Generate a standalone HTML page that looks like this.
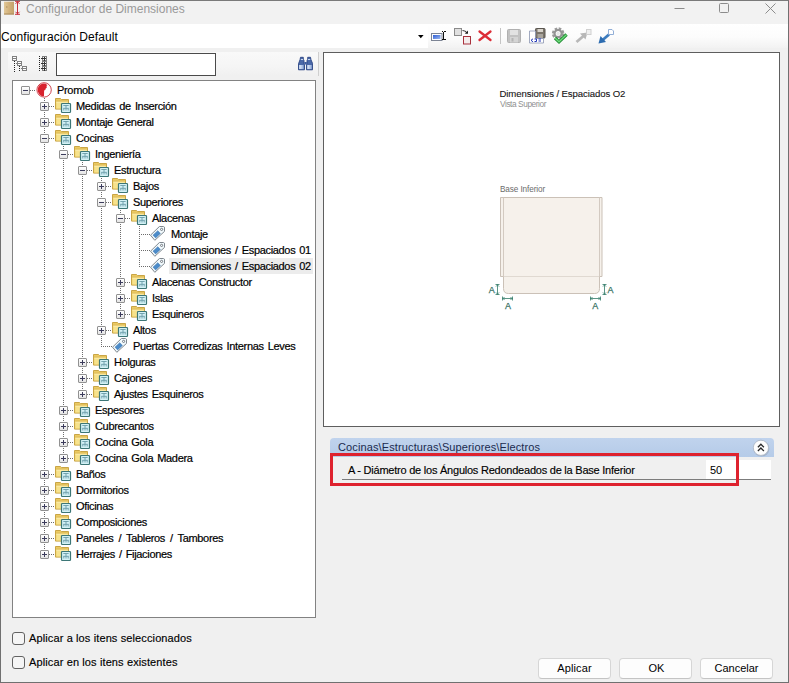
<!DOCTYPE html>
<html><head><meta charset="utf-8"><title>Configurador de Dimensiones</title>
<style>
*{box-sizing:border-box;margin:0;padding:0}
html,body{width:789px;height:683px;overflow:hidden;background:#f0f0f0;font-family:"Liberation Sans",sans-serif;font-size:11px;color:#000}
.abs,.eb,.ic,.tt{position:absolute}
#win{position:absolute;left:0;top:0;width:789px;height:683px;border:1px solid #707070;border-top-color:#7a7a7a;background:#f0f0f0}
#title{position:absolute;left:0;top:0;width:787px;height:23px;background:#f2f2f2}
#title .t{position:absolute;left:25px;top:1px;font-size:12px;line-height:15px;color:#9a9a9a;white-space:nowrap}
#tb{position:absolute;left:1px;top:24px;width:787px;height:24px;background:linear-gradient(#fff,#fcfcfc 55%,#f2f2f2)}
#combo{position:absolute;left:0;top:0;width:427px;height:24px;background:#fff}
#combo .t{position:absolute;left:0px;top:6px;letter-spacing:0.07px;font-size:12px;line-height:15px;white-space:nowrap}
.dl{stroke:#6c6c6c;stroke-width:1;stroke-dasharray:1 1}
.eb{width:9px;height:9px;border:1px solid #919191;background:linear-gradient(#fff,#e4e4e4);border-radius:1px}
.eb .h{position:absolute;left:1px;top:3px;width:5px;height:1px;background:#3c3c5c}
.eb .v{position:absolute;left:3px;top:1px;width:1px;height:5px;background:#3c3c5c}
.tt{height:16px;line-height:16px;padding:0 2px;white-space:nowrap;font-size:11px;-webkit-text-stroke:0.2px #000;letter-spacing:-0.33px;word-spacing:1.3px}
.tt.sel{background:#ececec}
#tree{position:absolute;left:12px;top:80px;width:304px;height:538px;border:1px solid #828282;background:#fff}
#ts{position:absolute;left:8px;top:52px;width:311px;height:24px;background:linear-gradient(#f9f9f9,#f5f5f5 60%,#f0f0f0);border-right:1px solid #cfcfcf}
#search{position:absolute;left:56px;top:53px;width:160px;height:23px;border:1px solid #4a4a4a;background:#fff}
#prev{position:absolute;left:323px;top:52px;width:457px;height:375px;border:1px solid #5e5e5e;background:#fff}
.btn{position:absolute;top:658px;height:21px;width:73px;border:1px solid #d6d6d6;border-bottom-color:#c4c4c4;border-radius:4px;background:#fdfdfd;text-align:center;line-height:19px;font-size:11px}
.cb{position:absolute;width:13px;height:13px;border:1px solid #626262;border-radius:3px;background:#f5f5f5}
.cl{position:absolute;-webkit-text-stroke:0.15px #000;font-size:11px;line-height:14px;white-space:nowrap;letter-spacing:0.12px}
#hdr{position:absolute;left:330px;top:438px;width:444px;height:19px;color:#1a2a4e;background:linear-gradient(#c0d3ed,#b5cbe8);border-radius:4px 4px 0 0}
#hdr .t{position:absolute;left:8px;top:2px;font-size:11px;line-height:14px;white-space:nowrap;letter-spacing:0.12px}
#row{position:absolute;left:342px;top:460px;width:429px;height:20px;border-bottom:1px solid #7c7c7c}
#row .t{position:absolute;left:6px;top:3px;font-size:11px;line-height:14px;white-space:nowrap;letter-spacing:-0.23px;-webkit-text-stroke:0.15px #000}
#val{position:absolute;left:706px;top:460px;width:65px;height:19px;background:#fff}
#val .t{position:absolute;left:4px;top:3px;font-size:11px;line-height:14px}
#red{position:absolute;left:330px;top:453px;width:409px;height:33px;border:3px solid #de222e}
</style></head><body>
<div id="win">
<div id="title"><div class="t">Configurador de Dimensiones</div></div>
</div>
<!-- title icon -->
<svg class="abs" style="left:3px;top:0px" width="20" height="16" viewBox="0 0 20 16">
<defs><linearGradient id="dg" x1="0" x2="1"><stop offset="0" stop-color="#e2c898"/><stop offset="0.5" stop-color="#d2b27c"/><stop offset="1" stop-color="#c4a26c"/></linearGradient></defs>
<rect x="1" y="1.700" width="10" height="12.800" fill="url(#dg)"/>
<rect x="1" y="13.500" width="10" height="1" fill="#a88a5c"/>
<circle cx="3.800" cy="7" r="0.800" fill="#b09060"/>
<path d="M12 1.300 h5 M12 14.300 h5 M14.500 1.500 v13 M12.500 3.800 l2-2 l2 2 M12.500 11.800 l2 2 l2-2" stroke="#c62f3a" stroke-width="1" fill="none"/>
</svg>
<!-- window controls -->
<svg class="abs" style="left:660px;top:0" width="128" height="24" viewBox="0 0 128 24">
<path d="M14.500 8.500 h10" stroke="#8c8c8c" stroke-width="1"/>
<rect x="59.500" y="3.500" width="9" height="9" rx="1" fill="none" stroke="#8c8c8c" stroke-width="1"/>
<path d="M105.500 3.500 l10 10 M115.500 3.500 l-10 10" stroke="#8c8c8c" stroke-width="1"/>
</svg>
<div id="tb"><div id="combo"><div class="t">Configuración Default</div></div></div>
<!-- toolbar icons -->
<svg class="abs" style="left:414px;top:24px" width="210" height="24" viewBox="0 0 210 24">
<defs><linearGradient id="bg1" x1="0" x2="1" y1="0" y2="1"><stop offset="0" stop-color="#2f5fd6"/><stop offset="1" stop-color="#9db8ee"/></linearGradient></defs>
<path d="M4 11 h5.600 l-2.800 3.200z" fill="#000"/>
<!-- rename -->
<rect x="17.500" y="9.500" width="10.500" height="7" fill="#fff" stroke="#7c8494"/>
<rect x="19" y="11" width="7.500" height="4" fill="url(#bg1)"/>
<path d="M27.500 7.500 h1.500 M30 7.500 h1.500 M27.500 15.500 h1.500 M30 15.500 h1.500 M29.500 8 v7.500" stroke="#111" stroke-width="1" shape-rendering="crispEdges"/>
<!-- copy squares -->
<rect x="40.500" y="4.500" width="7" height="7" fill="#e0e0e0" stroke="#8a8a8a"/>
<rect x="49.500" y="12.500" width="7" height="7.500" fill="#f4ecec" stroke="#a8303c"/>
<path d="M48.500 6.500 q3 0 4.500 2.500" stroke="#333" stroke-width="1.100" fill="none"/>
<path d="M50.800 9.800 h3.200 v-3.200z" fill="#222"/>
<!-- red X -->
<path d="M65.500 7.500 l11 8.500 M76.500 7.500 l-11 8.500" stroke="#dc2c36" stroke-width="2.300" stroke-linecap="round"/>
<!-- separator -->
<path d="M86.500 4 v16" stroke="#c4c4c4"/>
<!-- save gray -->
<rect x="93.500" y="5.500" width="13" height="13" rx="1" fill="#c2c2c2" stroke="#b0b0b0"/>
<rect x="96" y="6" width="8" height="5" fill="#e2e2e2"/>
<rect x="96" y="13" width="8" height="5.500" fill="#d4d4d4"/>
<rect x="97.500" y="14" width="2" height="3.500" fill="#b4b4b4"/>
<!-- save as -->
<rect x="121.500" y="4.500" width="9.500" height="9.500" rx="0.800" fill="#7a746a" stroke="#5a5650"/>
<rect x="123.500" y="5" width="5.500" height="3" fill="#d8d4cc"/>
<rect x="123.500" y="10" width="5.500" height="4" fill="#a8a49c"/>
<path d="M115.500 7 h6 v7.500 h8 v4.500 h-14z" fill="#fff" stroke="#8a94b0" stroke-width="0.800"/>
<path d="M119 14.800 l-2 1.500 l2 1.500 M120.500 17.500 h2 v-2.500 h-2 M124.500 15 h2.500 M124.500 17 h2.500" stroke="#2438b8" stroke-width="1" fill="none"/>
<!-- gear check -->
<circle cx="144.100" cy="9.600" r="4.600" fill="none" stroke="#9a9a9a" stroke-width="3.400" stroke-dasharray="2.300 1.310"/>
<circle cx="144.100" cy="9.600" r="3.600" fill="none" stroke="#949494" stroke-width="2.200"/>
<circle cx="144.100" cy="9.600" r="1.800" fill="#e8e8e8"/>
<path d="M141 14 l4 3.800 l7.600 -7.300" stroke="#1f8a32" stroke-width="3.200" fill="none"/>
<path d="M141 14 l4 3.800 l7.600 -7.300" stroke="#6fdc7c" stroke-width="1.300" fill="none"/>
<!-- gray arrow -->
<path d="M162.500 18 l7 -6" stroke="#b8b8b8" stroke-width="2.800"/>
<path d="M166 9.500 l7.500 -1 l-2 7z" fill="#b8b8b8"/>
<rect x="172.500" y="5.500" width="4.500" height="5" fill="#f0f0f0" stroke="#d0d0d0"/>
<!-- blue arrow -->
<path d="M195 10.500 l-7 6" stroke="#3d7cbe" stroke-width="2.800"/>
<path d="M184.500 19.500 l2 -7.500 l5.500 6z" fill="#2d6cb0"/>
<path d="M194.500 5.500 h3.500 l1.500 1.500 v3.500 h-5z" fill="#fff" stroke="#86a6d2" stroke-width="0.900"/>
</svg>
<div id="ts"></div>
<!-- tree toolbar icons -->
<svg class="abs" style="left:10px;top:54px" width="42" height="20" viewBox="10 54 42 20" shape-rendering="crispEdges">
<g stroke="#808080" fill="none" stroke-width="1">
<path d="M14.500 61 v11 M19.500 66 v6" stroke="#222" stroke-dasharray="1 1"/>
<path d="M39.500 56 v16" stroke="#222" stroke-dasharray="1 1"/>
<rect x="12.500" y="56.500" width="4" height="4" fill="#fff"/><path d="M13 58.500 h4"/>
<rect x="17.500" y="61.500" width="4" height="4" fill="#fff"/><path d="M16 63.500 h5"/>
<rect x="22.500" y="66.500" width="4" height="4" fill="#fff"/><path d="M21 68.500 h5"/>
<rect x="42.500" y="56.500" width="4" height="4" fill="#fff"/><path d="M41 58.500 h5 M44.500 57 v4" stroke="#333"/>
<rect x="42.500" y="61.500" width="4" height="4" fill="#fff"/><path d="M41 63.500 h5 M44.500 62 v4" stroke="#333"/>
<rect x="42.500" y="66.500" width="4" height="4" fill="#fff"/><path d="M41 68.500 h5 M44.500 67 v4" stroke="#333"/>
</g></svg>
<div id="search"></div>
<!-- binoculars -->
<svg class="abs" style="left:296px;top:55px" width="20" height="17" viewBox="296 55 20 17">
<defs><linearGradient id="bn" x1="0" x2="1"><stop offset="0" stop-color="#e8f0fc"/><stop offset="1" stop-color="#8ea8d8"/></linearGradient></defs>
<path d="M300.500 57.300 h2.800 v1.700 l0.700 1.500 v3 l0.500 1 v5.300 h-6 v-6 l1.500 -4z" fill="#4a68a8" stroke="#2c4684" stroke-width="0.900"/>
<path d="M307.700 57.300 h2.800 l0.500 2.500 l1.500 3.500 v6.500 h-6 v-5.300 l0.500 -1 v-3 l0.700 -1.500z" fill="#4a68a8" stroke="#2c4684" stroke-width="0.900"/>
<rect x="304.300" y="62" width="2.500" height="2.500" fill="#3c5a9c"/>
<rect x="299.200" y="65" width="4.500" height="4" fill="url(#bn)"/><rect x="307.300" y="65" width="4.500" height="4" fill="url(#bn)"/>
<path d="M300.800 59.500 h2.400 M307.800 59.500 h2.400" stroke="#c8d8f0" stroke-width="1"/>
</svg>
<div id="tree"></div>
<svg class="lines" width="789" height="683" style="position:absolute;left:0;top:0" shape-rendering="crispEdges">
<line x1="44.5" y1="98" x2="44.5" y2="555" class="dl"/>
<line x1="63.5" y1="146" x2="63.5" y2="459" class="dl"/>
<line x1="82.5" y1="162" x2="82.5" y2="395" class="dl"/>
<line x1="101.5" y1="178" x2="101.5" y2="347" class="dl"/>
<line x1="120.5" y1="210" x2="120.5" y2="315" class="dl"/>
<line x1="139.5" y1="226" x2="139.5" y2="267" class="dl"/>
<line x1="30" y1="90.5" x2="36" y2="90.5" class="dl"/>
<line x1="49" y1="106.5" x2="55" y2="106.5" class="dl"/>
<line x1="49" y1="122.5" x2="55" y2="122.5" class="dl"/>
<line x1="49" y1="138.5" x2="55" y2="138.5" class="dl"/>
<line x1="68" y1="154.5" x2="74" y2="154.5" class="dl"/>
<line x1="87" y1="170.5" x2="93" y2="170.5" class="dl"/>
<line x1="106" y1="186.5" x2="112" y2="186.5" class="dl"/>
<line x1="106" y1="202.5" x2="112" y2="202.5" class="dl"/>
<line x1="125" y1="218.5" x2="131" y2="218.5" class="dl"/>
<line x1="139" y1="234.5" x2="150" y2="234.5" class="dl"/>
<line x1="139" y1="250.5" x2="150" y2="250.5" class="dl"/>
<line x1="139" y1="266.5" x2="150" y2="266.5" class="dl"/>
<line x1="125" y1="282.5" x2="131" y2="282.5" class="dl"/>
<line x1="125" y1="298.5" x2="131" y2="298.5" class="dl"/>
<line x1="125" y1="314.5" x2="131" y2="314.5" class="dl"/>
<line x1="106" y1="330.5" x2="112" y2="330.5" class="dl"/>
<line x1="101" y1="346.5" x2="112" y2="346.5" class="dl"/>
<line x1="87" y1="362.5" x2="93" y2="362.5" class="dl"/>
<line x1="87" y1="378.5" x2="93" y2="378.5" class="dl"/>
<line x1="87" y1="394.5" x2="93" y2="394.5" class="dl"/>
<line x1="68" y1="410.5" x2="74" y2="410.5" class="dl"/>
<line x1="68" y1="426.5" x2="74" y2="426.5" class="dl"/>
<line x1="68" y1="442.5" x2="74" y2="442.5" class="dl"/>
<line x1="68" y1="458.5" x2="74" y2="458.5" class="dl"/>
<line x1="49" y1="474.5" x2="55" y2="474.5" class="dl"/>
<line x1="49" y1="490.5" x2="55" y2="490.5" class="dl"/>
<line x1="49" y1="506.5" x2="55" y2="506.5" class="dl"/>
<line x1="49" y1="522.5" x2="55" y2="522.5" class="dl"/>
<line x1="49" y1="538.5" x2="55" y2="538.5" class="dl"/>
<line x1="49" y1="554.5" x2="55" y2="554.5" class="dl"/>
</svg>
<div class="eb" style="left:21px;top:86px"><i class="h"></i></div>
<svg class="ic" style="left:36px;top:82px" width="17" height="17" viewBox="0 0 17 17"><circle cx="8.100" cy="7.900" r="7.200" fill="#fff" stroke="#cf4650" stroke-width="1"/><path d="M8 1.500 L10.900 2.100 L10.200 3 L11.400 3.800 L10.300 4.800 L10.900 5.800 L9.600 6.400 L9.800 7.300 L8.600 7.900 L8.100 9 L8 14.300 A6.400 6.400 0 0 1 8 1.500z" fill="#d8222e"/></svg>
<div class="tt" style="left:55px;top:82px">Promob</div>
<div class="eb" style="left:40px;top:102px"><i class="h"></i><i class="v"></i></div>
<svg class="ic" style="left:55px;top:98px" width="17" height="16" viewBox="0 0 17 16"><path d="M0.500 0.500 h5 l1 1 h7 v9.600 h-13z" fill="#ecca62" stroke="#c9a545" stroke-width="1"/><path d="M1.300 3.500 h11.400 v7 h-11.400z" fill="#f7e28c"/><path d="M1.300 3 h11.400" stroke="#d8b656" stroke-width="0.800"/><path d="M1.300 4.300 h11.400" stroke="#fbeeb0" stroke-width="0.800"/><rect x="6.500" y="5.500" width="9" height="9" rx="0.800" fill="#d3f1f6" stroke="#3c7676" stroke-width="1.200"/><path d="M8.300 7.500 h5.400 M8.300 10.300 h5.400 M11 7.500 v5 M8.800 10.300 v2.200 M13.200 10.300 v2.200" stroke="#6a9ca8" stroke-width="0.900" fill="none"/></svg>
<div class="tt" style="left:74px;top:98px">Medidas de Inserción</div>
<div class="eb" style="left:40px;top:118px"><i class="h"></i><i class="v"></i></div>
<svg class="ic" style="left:55px;top:114px" width="17" height="16" viewBox="0 0 17 16"><path d="M0.500 0.500 h5 l1 1 h7 v9.600 h-13z" fill="#ecca62" stroke="#c9a545" stroke-width="1"/><path d="M1.300 3.500 h11.400 v7 h-11.400z" fill="#f7e28c"/><path d="M1.300 3 h11.400" stroke="#d8b656" stroke-width="0.800"/><path d="M1.300 4.300 h11.400" stroke="#fbeeb0" stroke-width="0.800"/><rect x="6.500" y="5.500" width="9" height="9" rx="0.800" fill="#d3f1f6" stroke="#3c7676" stroke-width="1.200"/><path d="M8.300 7.500 h5.400 M8.300 10.300 h5.400 M11 7.500 v5 M8.800 10.300 v2.200 M13.200 10.300 v2.200" stroke="#6a9ca8" stroke-width="0.900" fill="none"/></svg>
<div class="tt" style="left:74px;top:114px">Montaje General</div>
<div class="eb" style="left:40px;top:134px"><i class="h"></i></div>
<svg class="ic" style="left:55px;top:130px" width="17" height="16" viewBox="0 0 17 16"><path d="M0.500 0.500 h5 l1 1 h7 v9.600 h-13z" fill="#ecca62" stroke="#c9a545" stroke-width="1"/><path d="M1.300 3.500 h11.400 v7 h-11.400z" fill="#f7e28c"/><path d="M1.300 3 h11.400" stroke="#d8b656" stroke-width="0.800"/><path d="M1.300 4.300 h11.400" stroke="#fbeeb0" stroke-width="0.800"/><rect x="6.500" y="5.500" width="9" height="9" rx="0.800" fill="#d3f1f6" stroke="#3c7676" stroke-width="1.200"/><path d="M8.300 7.500 h5.400 M8.300 10.300 h5.400 M11 7.500 v5 M8.800 10.300 v2.200 M13.200 10.300 v2.200" stroke="#6a9ca8" stroke-width="0.900" fill="none"/></svg>
<div class="tt" style="left:74px;top:130px">Cocinas</div>
<div class="eb" style="left:59px;top:150px"><i class="h"></i></div>
<svg class="ic" style="left:74px;top:146px" width="17" height="16" viewBox="0 0 17 16"><path d="M0.500 0.500 h5 l1 1 h7 v9.600 h-13z" fill="#ecca62" stroke="#c9a545" stroke-width="1"/><path d="M1.300 3.500 h11.400 v7 h-11.400z" fill="#f7e28c"/><path d="M1.300 3 h11.400" stroke="#d8b656" stroke-width="0.800"/><path d="M1.300 4.300 h11.400" stroke="#fbeeb0" stroke-width="0.800"/><rect x="6.500" y="5.500" width="9" height="9" rx="0.800" fill="#d3f1f6" stroke="#3c7676" stroke-width="1.200"/><path d="M8.300 7.500 h5.400 M8.300 10.300 h5.400 M11 7.500 v5 M8.800 10.300 v2.200 M13.200 10.300 v2.200" stroke="#6a9ca8" stroke-width="0.900" fill="none"/></svg>
<div class="tt" style="left:93px;top:146px">Ingeniería</div>
<div class="eb" style="left:78px;top:166px"><i class="h"></i></div>
<svg class="ic" style="left:93px;top:162px" width="17" height="16" viewBox="0 0 17 16"><path d="M0.500 0.500 h5 l1 1 h7 v9.600 h-13z" fill="#ecca62" stroke="#c9a545" stroke-width="1"/><path d="M1.300 3.500 h11.400 v7 h-11.400z" fill="#f7e28c"/><path d="M1.300 3 h11.400" stroke="#d8b656" stroke-width="0.800"/><path d="M1.300 4.300 h11.400" stroke="#fbeeb0" stroke-width="0.800"/><rect x="6.500" y="5.500" width="9" height="9" rx="0.800" fill="#d3f1f6" stroke="#3c7676" stroke-width="1.200"/><path d="M8.300 7.500 h5.400 M8.300 10.300 h5.400 M11 7.500 v5 M8.800 10.300 v2.200 M13.200 10.300 v2.200" stroke="#6a9ca8" stroke-width="0.900" fill="none"/></svg>
<div class="tt" style="left:112px;top:162px">Estructura</div>
<div class="eb" style="left:97px;top:182px"><i class="h"></i><i class="v"></i></div>
<svg class="ic" style="left:112px;top:178px" width="17" height="16" viewBox="0 0 17 16"><path d="M0.500 0.500 h5 l1 1 h7 v9.600 h-13z" fill="#ecca62" stroke="#c9a545" stroke-width="1"/><path d="M1.300 3.500 h11.400 v7 h-11.400z" fill="#f7e28c"/><path d="M1.300 3 h11.400" stroke="#d8b656" stroke-width="0.800"/><path d="M1.300 4.300 h11.400" stroke="#fbeeb0" stroke-width="0.800"/><rect x="6.500" y="5.500" width="9" height="9" rx="0.800" fill="#d3f1f6" stroke="#3c7676" stroke-width="1.200"/><path d="M8.300 7.500 h5.400 M8.300 10.300 h5.400 M11 7.500 v5 M8.800 10.300 v2.200 M13.200 10.300 v2.200" stroke="#6a9ca8" stroke-width="0.900" fill="none"/></svg>
<div class="tt" style="left:131px;top:178px">Bajos</div>
<div class="eb" style="left:97px;top:198px"><i class="h"></i></div>
<svg class="ic" style="left:112px;top:194px" width="17" height="16" viewBox="0 0 17 16"><path d="M0.500 0.500 h5 l1 1 h7 v9.600 h-13z" fill="#ecca62" stroke="#c9a545" stroke-width="1"/><path d="M1.300 3.500 h11.400 v7 h-11.400z" fill="#f7e28c"/><path d="M1.300 3 h11.400" stroke="#d8b656" stroke-width="0.800"/><path d="M1.300 4.300 h11.400" stroke="#fbeeb0" stroke-width="0.800"/><rect x="6.500" y="5.500" width="9" height="9" rx="0.800" fill="#d3f1f6" stroke="#3c7676" stroke-width="1.200"/><path d="M8.300 7.500 h5.400 M8.300 10.300 h5.400 M11 7.500 v5 M8.800 10.300 v2.200 M13.200 10.300 v2.200" stroke="#6a9ca8" stroke-width="0.900" fill="none"/></svg>
<div class="tt" style="left:131px;top:194px">Superiores</div>
<div class="eb" style="left:116px;top:214px"><i class="h"></i></div>
<svg class="ic" style="left:131px;top:210px" width="17" height="16" viewBox="0 0 17 16"><path d="M0.500 0.500 h5 l1 1 h7 v9.600 h-13z" fill="#ecca62" stroke="#c9a545" stroke-width="1"/><path d="M1.300 3.500 h11.400 v7 h-11.400z" fill="#f7e28c"/><path d="M1.300 3 h11.400" stroke="#d8b656" stroke-width="0.800"/><path d="M1.300 4.300 h11.400" stroke="#fbeeb0" stroke-width="0.800"/><rect x="6.500" y="5.500" width="9" height="9" rx="0.800" fill="#d3f1f6" stroke="#3c7676" stroke-width="1.200"/><path d="M8.300 7.500 h5.400 M8.300 10.300 h5.400 M11 7.500 v5 M8.800 10.300 v2.200 M13.200 10.300 v2.200" stroke="#6a9ca8" stroke-width="0.900" fill="none"/></svg>
<div class="tt" style="left:150px;top:210px">Alacenas</div>
<svg class="ic" style="left:150px;top:226px" width="16" height="16" viewBox="0 0 16 16"><path d="M0.500 9.200 L4.800 14.300 L14.500 5.400 L14.500 1.200 L13.400 0.500 L9.400 0.500z" fill="#f2fafd" stroke="#7f878e" stroke-width="1" stroke-linejoin="round"/><rect x="3.450" y="6.400" width="6.500" height="3.800" fill="#4b8bc9" stroke="#3d74ad" stroke-width="0.500" transform="rotate(-43 6.700 8.300)"/><circle cx="11.600" cy="3.400" r="1.100" fill="#fff" stroke="#666e76" stroke-width="0.900"/></svg>
<div class="tt" style="left:169px;top:226px">Montaje</div>
<svg class="ic" style="left:150px;top:242px" width="16" height="16" viewBox="0 0 16 16"><path d="M0.500 9.200 L4.800 14.300 L14.500 5.400 L14.500 1.200 L13.400 0.500 L9.400 0.500z" fill="#f2fafd" stroke="#7f878e" stroke-width="1" stroke-linejoin="round"/><rect x="3.450" y="6.400" width="6.500" height="3.800" fill="#4b8bc9" stroke="#3d74ad" stroke-width="0.500" transform="rotate(-43 6.700 8.300)"/><circle cx="11.600" cy="3.400" r="1.100" fill="#fff" stroke="#666e76" stroke-width="0.900"/></svg>
<div class="tt" style="left:169px;top:242px">Dimensiones / Espaciados 01</div>
<svg class="ic" style="left:150px;top:258px" width="16" height="16" viewBox="0 0 16 16"><path d="M0.500 9.200 L4.800 14.300 L14.500 5.400 L14.500 1.200 L13.400 0.500 L9.400 0.500z" fill="#f2fafd" stroke="#7f878e" stroke-width="1" stroke-linejoin="round"/><rect x="3.450" y="6.400" width="6.500" height="3.800" fill="#4b8bc9" stroke="#3d74ad" stroke-width="0.500" transform="rotate(-43 6.700 8.300)"/><circle cx="11.600" cy="3.400" r="1.100" fill="#fff" stroke="#666e76" stroke-width="0.900"/></svg>
<div class="tt sel" style="left:169px;top:258px">Dimensiones / Espaciados 02</div>
<div class="eb" style="left:116px;top:278px"><i class="h"></i><i class="v"></i></div>
<svg class="ic" style="left:131px;top:274px" width="17" height="16" viewBox="0 0 17 16"><path d="M0.500 0.500 h5 l1 1 h7 v9.600 h-13z" fill="#ecca62" stroke="#c9a545" stroke-width="1"/><path d="M1.300 3.500 h11.400 v7 h-11.400z" fill="#f7e28c"/><path d="M1.300 3 h11.400" stroke="#d8b656" stroke-width="0.800"/><path d="M1.300 4.300 h11.400" stroke="#fbeeb0" stroke-width="0.800"/><rect x="6.500" y="5.500" width="9" height="9" rx="0.800" fill="#d3f1f6" stroke="#3c7676" stroke-width="1.200"/><path d="M8.300 7.500 h5.400 M8.300 10.300 h5.400 M11 7.500 v5 M8.800 10.300 v2.200 M13.200 10.300 v2.200" stroke="#6a9ca8" stroke-width="0.900" fill="none"/></svg>
<div class="tt" style="left:150px;top:274px">Alacenas Constructor</div>
<div class="eb" style="left:116px;top:294px"><i class="h"></i><i class="v"></i></div>
<svg class="ic" style="left:131px;top:290px" width="17" height="16" viewBox="0 0 17 16"><path d="M0.500 0.500 h5 l1 1 h7 v9.600 h-13z" fill="#ecca62" stroke="#c9a545" stroke-width="1"/><path d="M1.300 3.500 h11.400 v7 h-11.400z" fill="#f7e28c"/><path d="M1.300 3 h11.400" stroke="#d8b656" stroke-width="0.800"/><path d="M1.300 4.300 h11.400" stroke="#fbeeb0" stroke-width="0.800"/><rect x="6.500" y="5.500" width="9" height="9" rx="0.800" fill="#d3f1f6" stroke="#3c7676" stroke-width="1.200"/><path d="M8.300 7.500 h5.400 M8.300 10.300 h5.400 M11 7.500 v5 M8.800 10.300 v2.200 M13.200 10.300 v2.200" stroke="#6a9ca8" stroke-width="0.900" fill="none"/></svg>
<div class="tt" style="left:150px;top:290px">Islas</div>
<div class="eb" style="left:116px;top:310px"><i class="h"></i><i class="v"></i></div>
<svg class="ic" style="left:131px;top:306px" width="17" height="16" viewBox="0 0 17 16"><path d="M0.500 0.500 h5 l1 1 h7 v9.600 h-13z" fill="#ecca62" stroke="#c9a545" stroke-width="1"/><path d="M1.300 3.500 h11.400 v7 h-11.400z" fill="#f7e28c"/><path d="M1.300 3 h11.400" stroke="#d8b656" stroke-width="0.800"/><path d="M1.300 4.300 h11.400" stroke="#fbeeb0" stroke-width="0.800"/><rect x="6.500" y="5.500" width="9" height="9" rx="0.800" fill="#d3f1f6" stroke="#3c7676" stroke-width="1.200"/><path d="M8.300 7.500 h5.400 M8.300 10.300 h5.400 M11 7.500 v5 M8.800 10.300 v2.200 M13.200 10.300 v2.200" stroke="#6a9ca8" stroke-width="0.900" fill="none"/></svg>
<div class="tt" style="left:150px;top:306px">Esquineros</div>
<div class="eb" style="left:97px;top:326px"><i class="h"></i><i class="v"></i></div>
<svg class="ic" style="left:112px;top:322px" width="17" height="16" viewBox="0 0 17 16"><path d="M0.500 0.500 h5 l1 1 h7 v9.600 h-13z" fill="#ecca62" stroke="#c9a545" stroke-width="1"/><path d="M1.300 3.500 h11.400 v7 h-11.400z" fill="#f7e28c"/><path d="M1.300 3 h11.400" stroke="#d8b656" stroke-width="0.800"/><path d="M1.300 4.300 h11.400" stroke="#fbeeb0" stroke-width="0.800"/><rect x="6.500" y="5.500" width="9" height="9" rx="0.800" fill="#d3f1f6" stroke="#3c7676" stroke-width="1.200"/><path d="M8.300 7.500 h5.400 M8.300 10.300 h5.400 M11 7.500 v5 M8.800 10.300 v2.200 M13.200 10.300 v2.200" stroke="#6a9ca8" stroke-width="0.900" fill="none"/></svg>
<div class="tt" style="left:131px;top:322px">Altos</div>
<svg class="ic" style="left:112px;top:338px" width="16" height="16" viewBox="0 0 16 16"><path d="M0.500 9.200 L4.800 14.300 L14.500 5.400 L14.500 1.200 L13.400 0.500 L9.400 0.500z" fill="#f2fafd" stroke="#7f878e" stroke-width="1" stroke-linejoin="round"/><rect x="3.450" y="6.400" width="6.500" height="3.800" fill="#4b8bc9" stroke="#3d74ad" stroke-width="0.500" transform="rotate(-43 6.700 8.300)"/><circle cx="11.600" cy="3.400" r="1.100" fill="#fff" stroke="#666e76" stroke-width="0.900"/></svg>
<div class="tt" style="left:131px;top:338px">Puertas Corredizas Internas Leves</div>
<div class="eb" style="left:78px;top:358px"><i class="h"></i><i class="v"></i></div>
<svg class="ic" style="left:93px;top:354px" width="17" height="16" viewBox="0 0 17 16"><path d="M0.500 0.500 h5 l1 1 h7 v9.600 h-13z" fill="#ecca62" stroke="#c9a545" stroke-width="1"/><path d="M1.300 3.500 h11.400 v7 h-11.400z" fill="#f7e28c"/><path d="M1.300 3 h11.400" stroke="#d8b656" stroke-width="0.800"/><path d="M1.300 4.300 h11.400" stroke="#fbeeb0" stroke-width="0.800"/><rect x="6.500" y="5.500" width="9" height="9" rx="0.800" fill="#d3f1f6" stroke="#3c7676" stroke-width="1.200"/><path d="M8.300 7.500 h5.400 M8.300 10.300 h5.400 M11 7.500 v5 M8.800 10.300 v2.200 M13.200 10.300 v2.200" stroke="#6a9ca8" stroke-width="0.900" fill="none"/></svg>
<div class="tt" style="left:112px;top:354px">Holguras</div>
<div class="eb" style="left:78px;top:374px"><i class="h"></i><i class="v"></i></div>
<svg class="ic" style="left:93px;top:370px" width="17" height="16" viewBox="0 0 17 16"><path d="M0.500 0.500 h5 l1 1 h7 v9.600 h-13z" fill="#ecca62" stroke="#c9a545" stroke-width="1"/><path d="M1.300 3.500 h11.400 v7 h-11.400z" fill="#f7e28c"/><path d="M1.300 3 h11.400" stroke="#d8b656" stroke-width="0.800"/><path d="M1.300 4.300 h11.400" stroke="#fbeeb0" stroke-width="0.800"/><rect x="6.500" y="5.500" width="9" height="9" rx="0.800" fill="#d3f1f6" stroke="#3c7676" stroke-width="1.200"/><path d="M8.300 7.500 h5.400 M8.300 10.300 h5.400 M11 7.500 v5 M8.800 10.300 v2.200 M13.200 10.300 v2.200" stroke="#6a9ca8" stroke-width="0.900" fill="none"/></svg>
<div class="tt" style="left:112px;top:370px">Cajones</div>
<div class="eb" style="left:78px;top:390px"><i class="h"></i><i class="v"></i></div>
<svg class="ic" style="left:93px;top:386px" width="17" height="16" viewBox="0 0 17 16"><path d="M0.500 0.500 h5 l1 1 h7 v9.600 h-13z" fill="#ecca62" stroke="#c9a545" stroke-width="1"/><path d="M1.300 3.500 h11.400 v7 h-11.400z" fill="#f7e28c"/><path d="M1.300 3 h11.400" stroke="#d8b656" stroke-width="0.800"/><path d="M1.300 4.300 h11.400" stroke="#fbeeb0" stroke-width="0.800"/><rect x="6.500" y="5.500" width="9" height="9" rx="0.800" fill="#d3f1f6" stroke="#3c7676" stroke-width="1.200"/><path d="M8.300 7.500 h5.400 M8.300 10.300 h5.400 M11 7.500 v5 M8.800 10.300 v2.200 M13.200 10.300 v2.200" stroke="#6a9ca8" stroke-width="0.900" fill="none"/></svg>
<div class="tt" style="left:112px;top:386px">Ajustes Esquineros</div>
<div class="eb" style="left:59px;top:406px"><i class="h"></i><i class="v"></i></div>
<svg class="ic" style="left:74px;top:402px" width="17" height="16" viewBox="0 0 17 16"><path d="M0.500 0.500 h5 l1 1 h7 v9.600 h-13z" fill="#ecca62" stroke="#c9a545" stroke-width="1"/><path d="M1.300 3.500 h11.400 v7 h-11.400z" fill="#f7e28c"/><path d="M1.300 3 h11.400" stroke="#d8b656" stroke-width="0.800"/><path d="M1.300 4.300 h11.400" stroke="#fbeeb0" stroke-width="0.800"/><rect x="6.500" y="5.500" width="9" height="9" rx="0.800" fill="#d3f1f6" stroke="#3c7676" stroke-width="1.200"/><path d="M8.300 7.500 h5.400 M8.300 10.300 h5.400 M11 7.500 v5 M8.800 10.300 v2.200 M13.200 10.300 v2.200" stroke="#6a9ca8" stroke-width="0.900" fill="none"/></svg>
<div class="tt" style="left:93px;top:402px">Espesores</div>
<div class="eb" style="left:59px;top:422px"><i class="h"></i><i class="v"></i></div>
<svg class="ic" style="left:74px;top:418px" width="17" height="16" viewBox="0 0 17 16"><path d="M0.500 0.500 h5 l1 1 h7 v9.600 h-13z" fill="#ecca62" stroke="#c9a545" stroke-width="1"/><path d="M1.300 3.500 h11.400 v7 h-11.400z" fill="#f7e28c"/><path d="M1.300 3 h11.400" stroke="#d8b656" stroke-width="0.800"/><path d="M1.300 4.300 h11.400" stroke="#fbeeb0" stroke-width="0.800"/><rect x="6.500" y="5.500" width="9" height="9" rx="0.800" fill="#d3f1f6" stroke="#3c7676" stroke-width="1.200"/><path d="M8.300 7.500 h5.400 M8.300 10.300 h5.400 M11 7.500 v5 M8.800 10.300 v2.200 M13.200 10.300 v2.200" stroke="#6a9ca8" stroke-width="0.900" fill="none"/></svg>
<div class="tt" style="left:93px;top:418px">Cubrecantos</div>
<div class="eb" style="left:59px;top:438px"><i class="h"></i><i class="v"></i></div>
<svg class="ic" style="left:74px;top:434px" width="17" height="16" viewBox="0 0 17 16"><path d="M0.500 0.500 h5 l1 1 h7 v9.600 h-13z" fill="#ecca62" stroke="#c9a545" stroke-width="1"/><path d="M1.300 3.500 h11.400 v7 h-11.400z" fill="#f7e28c"/><path d="M1.300 3 h11.400" stroke="#d8b656" stroke-width="0.800"/><path d="M1.300 4.300 h11.400" stroke="#fbeeb0" stroke-width="0.800"/><rect x="6.500" y="5.500" width="9" height="9" rx="0.800" fill="#d3f1f6" stroke="#3c7676" stroke-width="1.200"/><path d="M8.300 7.500 h5.400 M8.300 10.300 h5.400 M11 7.500 v5 M8.800 10.300 v2.200 M13.200 10.300 v2.200" stroke="#6a9ca8" stroke-width="0.900" fill="none"/></svg>
<div class="tt" style="left:93px;top:434px">Cocina Gola</div>
<div class="eb" style="left:59px;top:454px"><i class="h"></i><i class="v"></i></div>
<svg class="ic" style="left:74px;top:450px" width="17" height="16" viewBox="0 0 17 16"><path d="M0.500 0.500 h5 l1 1 h7 v9.600 h-13z" fill="#ecca62" stroke="#c9a545" stroke-width="1"/><path d="M1.300 3.500 h11.400 v7 h-11.400z" fill="#f7e28c"/><path d="M1.300 3 h11.400" stroke="#d8b656" stroke-width="0.800"/><path d="M1.300 4.300 h11.400" stroke="#fbeeb0" stroke-width="0.800"/><rect x="6.500" y="5.500" width="9" height="9" rx="0.800" fill="#d3f1f6" stroke="#3c7676" stroke-width="1.200"/><path d="M8.300 7.500 h5.400 M8.300 10.300 h5.400 M11 7.500 v5 M8.800 10.300 v2.200 M13.200 10.300 v2.200" stroke="#6a9ca8" stroke-width="0.900" fill="none"/></svg>
<div class="tt" style="left:93px;top:450px">Cocina Gola Madera</div>
<div class="eb" style="left:40px;top:470px"><i class="h"></i><i class="v"></i></div>
<svg class="ic" style="left:55px;top:466px" width="17" height="16" viewBox="0 0 17 16"><path d="M0.500 0.500 h5 l1 1 h7 v9.600 h-13z" fill="#ecca62" stroke="#c9a545" stroke-width="1"/><path d="M1.300 3.500 h11.400 v7 h-11.400z" fill="#f7e28c"/><path d="M1.300 3 h11.400" stroke="#d8b656" stroke-width="0.800"/><path d="M1.300 4.300 h11.400" stroke="#fbeeb0" stroke-width="0.800"/><rect x="6.500" y="5.500" width="9" height="9" rx="0.800" fill="#d3f1f6" stroke="#3c7676" stroke-width="1.200"/><path d="M8.300 7.500 h5.400 M8.300 10.300 h5.400 M11 7.500 v5 M8.800 10.300 v2.200 M13.200 10.300 v2.200" stroke="#6a9ca8" stroke-width="0.900" fill="none"/></svg>
<div class="tt" style="left:74px;top:466px">Baños</div>
<div class="eb" style="left:40px;top:486px"><i class="h"></i><i class="v"></i></div>
<svg class="ic" style="left:55px;top:482px" width="17" height="16" viewBox="0 0 17 16"><path d="M0.500 0.500 h5 l1 1 h7 v9.600 h-13z" fill="#ecca62" stroke="#c9a545" stroke-width="1"/><path d="M1.300 3.500 h11.400 v7 h-11.400z" fill="#f7e28c"/><path d="M1.300 3 h11.400" stroke="#d8b656" stroke-width="0.800"/><path d="M1.300 4.300 h11.400" stroke="#fbeeb0" stroke-width="0.800"/><rect x="6.500" y="5.500" width="9" height="9" rx="0.800" fill="#d3f1f6" stroke="#3c7676" stroke-width="1.200"/><path d="M8.300 7.500 h5.400 M8.300 10.300 h5.400 M11 7.500 v5 M8.800 10.300 v2.200 M13.200 10.300 v2.200" stroke="#6a9ca8" stroke-width="0.900" fill="none"/></svg>
<div class="tt" style="left:74px;top:482px">Dormitorios</div>
<div class="eb" style="left:40px;top:502px"><i class="h"></i><i class="v"></i></div>
<svg class="ic" style="left:55px;top:498px" width="17" height="16" viewBox="0 0 17 16"><path d="M0.500 0.500 h5 l1 1 h7 v9.600 h-13z" fill="#ecca62" stroke="#c9a545" stroke-width="1"/><path d="M1.300 3.500 h11.400 v7 h-11.400z" fill="#f7e28c"/><path d="M1.300 3 h11.400" stroke="#d8b656" stroke-width="0.800"/><path d="M1.300 4.300 h11.400" stroke="#fbeeb0" stroke-width="0.800"/><rect x="6.500" y="5.500" width="9" height="9" rx="0.800" fill="#d3f1f6" stroke="#3c7676" stroke-width="1.200"/><path d="M8.300 7.500 h5.400 M8.300 10.300 h5.400 M11 7.500 v5 M8.800 10.300 v2.200 M13.200 10.300 v2.200" stroke="#6a9ca8" stroke-width="0.900" fill="none"/></svg>
<div class="tt" style="left:74px;top:498px">Oficinas</div>
<div class="eb" style="left:40px;top:518px"><i class="h"></i><i class="v"></i></div>
<svg class="ic" style="left:55px;top:514px" width="17" height="16" viewBox="0 0 17 16"><path d="M0.500 0.500 h5 l1 1 h7 v9.600 h-13z" fill="#ecca62" stroke="#c9a545" stroke-width="1"/><path d="M1.300 3.500 h11.400 v7 h-11.400z" fill="#f7e28c"/><path d="M1.300 3 h11.400" stroke="#d8b656" stroke-width="0.800"/><path d="M1.300 4.300 h11.400" stroke="#fbeeb0" stroke-width="0.800"/><rect x="6.500" y="5.500" width="9" height="9" rx="0.800" fill="#d3f1f6" stroke="#3c7676" stroke-width="1.200"/><path d="M8.300 7.500 h5.400 M8.300 10.300 h5.400 M11 7.500 v5 M8.800 10.300 v2.200 M13.200 10.300 v2.200" stroke="#6a9ca8" stroke-width="0.900" fill="none"/></svg>
<div class="tt" style="left:74px;top:514px">Composiciones</div>
<div class="eb" style="left:40px;top:534px"><i class="h"></i><i class="v"></i></div>
<svg class="ic" style="left:55px;top:530px" width="17" height="16" viewBox="0 0 17 16"><path d="M0.500 0.500 h5 l1 1 h7 v9.600 h-13z" fill="#ecca62" stroke="#c9a545" stroke-width="1"/><path d="M1.300 3.500 h11.400 v7 h-11.400z" fill="#f7e28c"/><path d="M1.300 3 h11.400" stroke="#d8b656" stroke-width="0.800"/><path d="M1.300 4.300 h11.400" stroke="#fbeeb0" stroke-width="0.800"/><rect x="6.500" y="5.500" width="9" height="9" rx="0.800" fill="#d3f1f6" stroke="#3c7676" stroke-width="1.200"/><path d="M8.300 7.500 h5.400 M8.300 10.300 h5.400 M11 7.500 v5 M8.800 10.300 v2.200 M13.200 10.300 v2.200" stroke="#6a9ca8" stroke-width="0.900" fill="none"/></svg>
<div class="tt" style="left:74px;top:530px;word-spacing:2.3px">Paneles / Tableros / Tambores</div>
<div class="eb" style="left:40px;top:550px"><i class="h"></i><i class="v"></i></div>
<svg class="ic" style="left:55px;top:546px" width="17" height="16" viewBox="0 0 17 16"><path d="M0.500 0.500 h5 l1 1 h7 v9.600 h-13z" fill="#ecca62" stroke="#c9a545" stroke-width="1"/><path d="M1.300 3.500 h11.400 v7 h-11.400z" fill="#f7e28c"/><path d="M1.300 3 h11.400" stroke="#d8b656" stroke-width="0.800"/><path d="M1.300 4.300 h11.400" stroke="#fbeeb0" stroke-width="0.800"/><rect x="6.500" y="5.500" width="9" height="9" rx="0.800" fill="#d3f1f6" stroke="#3c7676" stroke-width="1.200"/><path d="M8.300 7.500 h5.400 M8.300 10.300 h5.400 M11 7.500 v5 M8.800 10.300 v2.200 M13.200 10.300 v2.200" stroke="#6a9ca8" stroke-width="0.900" fill="none"/></svg>
<div class="tt" style="left:74px;top:546px">Herrajes / Fijaciones</div>
<div id="prev"></div>
<!-- preview content -->
<div class="abs" style="left:499.500px;top:88px;font-size:9.600px;line-height:12px;white-space:nowrap;color:#151515;letter-spacing:-0.1px;-webkit-text-stroke:0.1px #151515">Dimensiones / Espaciados O2</div>
<div class="abs" style="left:500px;top:99px;font-size:8.300px;line-height:10px;white-space:nowrap;color:#919191;letter-spacing:-0.42px">Vista Superior</div>
<div class="abs" style="left:500px;top:184.500px;font-size:8.200px;line-height:10px;white-space:nowrap;color:#6c6c6c;letter-spacing:-0.1px">Base Inferior</div>
<svg class="abs" style="left:480px;top:190px" width="150" height="130" viewBox="480 190 150 130">
<path d="M500.500 197.500 h101.500 v79 h-101.500z" fill="#f6f1eb" stroke="#cbc1b7" stroke-width="1"/>
<path d="M503.500 197.500 v79 M599.500 197.500 v79" stroke="#d3cac1" stroke-width="1"/>
<path d="M503.500 276.500 v12 q0 5 5 5 h86 q5 0 5 -5 v-12" fill="#f6f1eb" stroke="#cbc1b7" stroke-width="1"/>
<g stroke="#3c8270" stroke-width="0.850" fill="none">
<path d="M497.500 284 v11 M495.500 284.500 h4 M495.500 294.500 h4 M496 286.500 l1.500 -1.500 l1.500 1.500 M496 292.500 l1.500 1.500 l1.500 -1.500"/>
<path d="M604.500 284 v11 M602.500 284.500 h4 M602.500 294.500 h4 M603 286.500 l1.500 -1.500 l1.500 1.500 M603 292.500 l1.500 1.500 l1.500 -1.500"/>
<path d="M502.500 298.500 h10.500 M502.500 296.500 v4 M512.500 296.500 v4 M504.500 297 l-1.500 1.500 l1.500 1.500 M510.500 297 l1.500 1.500 l-1.500 1.500"/>
<path d="M590 298.500 h10.500 M590.500 296.500 v4 M600.500 296.500 v4 M592.500 297 l-1.500 1.500 l1.500 1.500 M598.500 297 l1.500 1.500 l-1.500 1.500"/>
</g>
<g font-family="Liberation Sans, sans-serif" font-size="9" fill="#35705f" stroke="#35705f" stroke-width="0.250">
<text x="488.800" y="293.200">A</text><text x="607.500" y="293.200">A</text><text x="505" y="308.500">A</text><text x="592.200" y="308.500">A</text>
</g>
</svg>
<div id="hdr"><div class="t">Cocinas\Estructuras\Superiores\Electros</div></div>
<svg class="abs" style="left:751px;top:437.500px" width="20" height="20" viewBox="0 0 20 20">
<circle cx="10.400" cy="10.500" r="8" fill="#8a96a8" opacity="0.450"/>
<circle cx="9.900" cy="9.800" r="7.600" fill="#fdfdfd" stroke="#aab4c2" stroke-width="0.800"/>
<path d="M6.900 9.200 l3 -3 l3 3 M6.900 13 l3 -3 l3 3" stroke="#2a2a2a" stroke-width="1.300" fill="none"/>
</svg>
<div id="row"><div class="t">A - Diámetro de los Ángulos Redondeados de la Base Inferior</div></div>
<div id="val"><div class="t">50</div></div>
<div id="red"></div>
<div class="cb" style="left:12px;top:632px"></div><div class="cl" style="left:29px;top:631px">Aplicar a los itens seleccionados</div>
<div class="cb" style="left:12px;top:656px"></div><div class="cl" style="left:29px;top:655px">Aplicar en los itens existentes</div>
<div class="btn" style="left:538px;letter-spacing:0.15px">Aplicar</div>
<div class="btn" style="left:619px;padding-left:2px">OK</div>
<div class="btn" style="left:700px">Cancelar</div>
</body></html>
